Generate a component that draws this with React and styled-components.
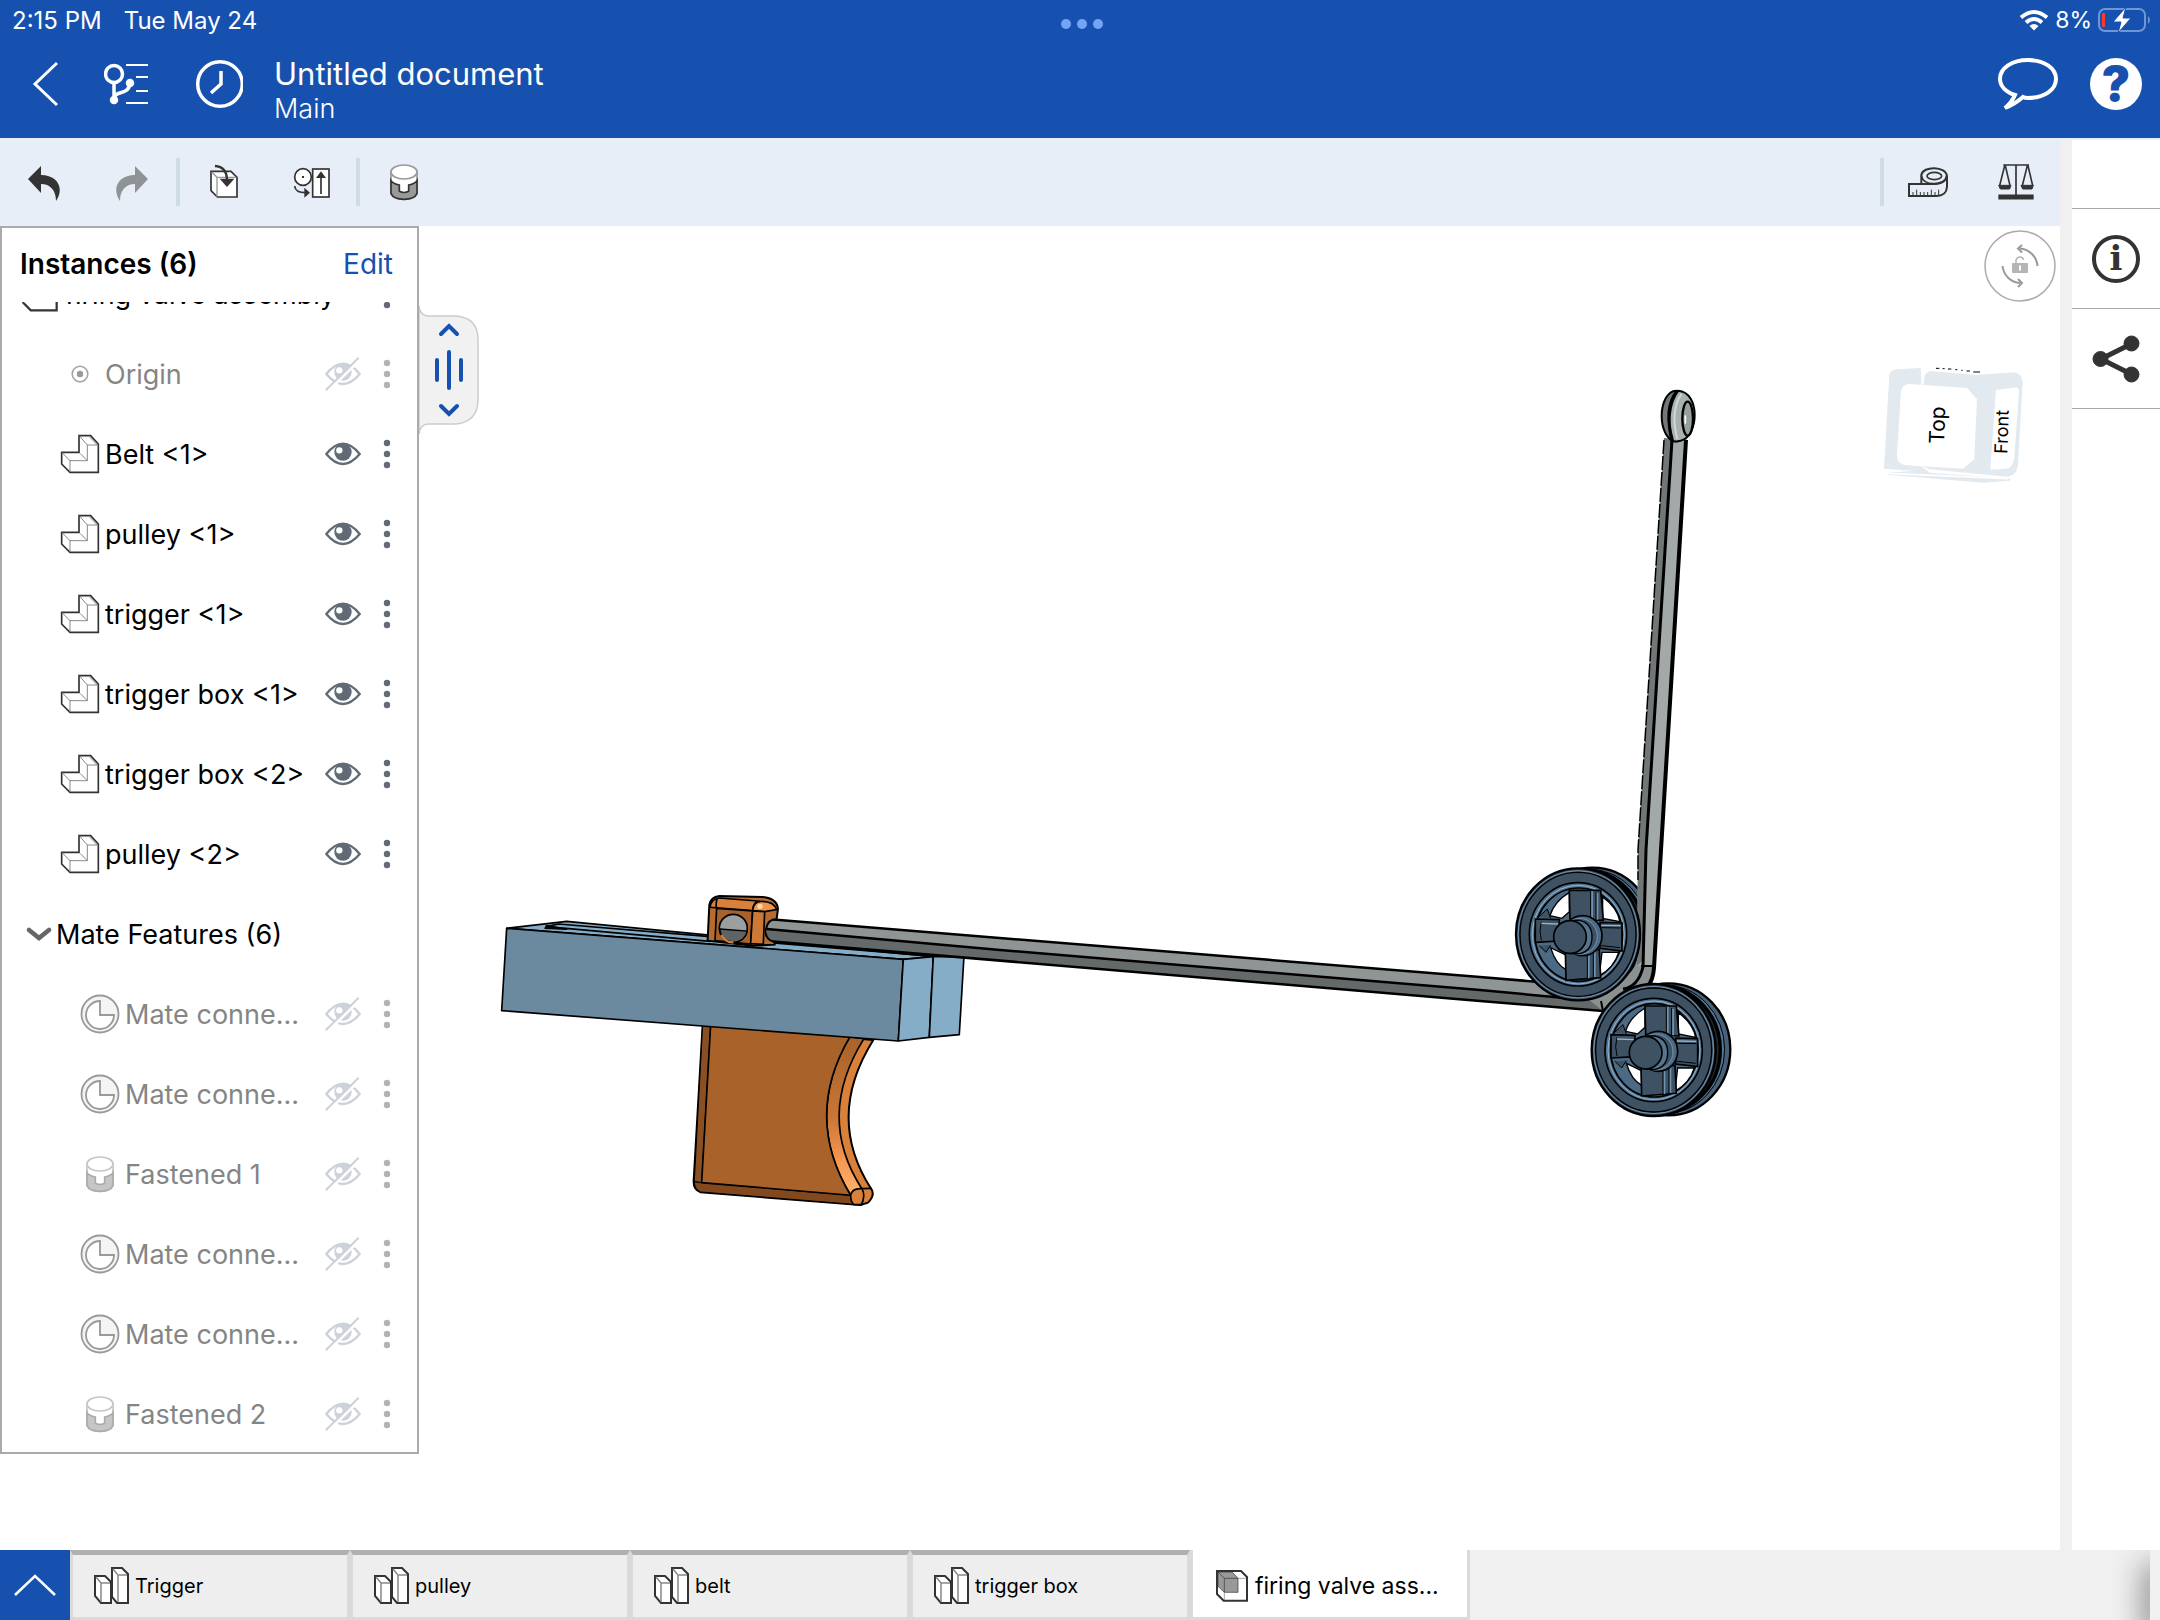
import React from "react";
import styled, { createGlobalStyle } from "styled-components";

const GlobalStyle = createGlobalStyle`
  * {
    box-sizing: border-box;
  }

  body {
    margin: 0;
    background: #ffffff;
    color: #000000;
    font-family: Inter, "Liberation Sans", sans-serif;
  }

  button {
    border: 0;
    padding: 0;
    background: none;
    color: inherit;
    font: inherit;
    cursor: pointer;
  }

  svg {
    display: block;
    flex: none;
  }
`;

const Page = styled.div`
  display: flex;
  flex-direction: column;
  min-height: 100vh;
`;

/* header */

const Header = styled.header`
  padding-bottom: 10px;
  background: #1651b0;
  color: #ffffff;
`;

const StatusBar = styled.div`
  display: grid;
  grid-template-columns: 1fr auto 1fr;
  align-items: center;
  height: 40px;
  padding: 0 8px 0 12px;
  font-size: 24px;
`;

const StatusLeft = styled.div`
  display: flex;
  gap: 22px;
`;

const StatusRight = styled.div`
  display: flex;
  justify-content: flex-end;
  align-items: center;
  gap: 6px;
  font-size: 23px;
`;

const MultitaskDots = styled.button`
  display: flex;
  gap: 6px;
  padding-top: 8px;

  i {
    width: 10px;
    height: 10px;
    border-radius: 50%;
    background: #74a5f5;
  }
`;

const Nav = styled.nav`
  display: flex;
  align-items: center;
  height: 88px;
`;

const IconButton = styled.button`
  display: flex;
  flex: none;
  align-items: center;
  justify-content: center;
  width: ${(props) => props.$width || 88}px;
  height: 84px;
`;

const TitleBlock = styled.div`
  flex: 1;
  padding-top: 10px;
`;

const Title = styled.h1`
  margin: 0;
  font-size: 31px;
  font-weight: 400;
  line-height: 40px;
`;

const Branch = styled.p`
  margin: 0;
  font-size: 27px;
  font-weight: 300;
  line-height: 30px;
`;

const HelpBadge = styled.span`
  width: 52px;
  height: 52px;
  border-radius: 50%;
  background: #ffffff;
  color: #1651b0;
  font-size: 48px;
  font-weight: 900;
  line-height: 52px;
`;

/* workspace */

const Workspace = styled.div`
  display: flex;
  flex: 1;
  border-top: 2px solid #e7eef8;
`;

const Main = styled.main`
  display: flex;
  flex: 1;
  flex-direction: column;
  min-width: 0;
`;

const Gutter = styled.div`
  width: 12px;
  background: #f0f0f0;
`;

const Rail = styled.aside`
  width: 88px;
`;

const RailSpacer = styled.div`
  height: 69px;
  border-bottom: 1px solid #aaaaaa;
`;

const RailButton = styled.button`
  display: flex;
  align-items: center;
  justify-content: center;
  width: 100%;
  height: 100px;
  border-bottom: 1px solid #aaaaaa;
`;

const InfoBadge = styled.span`
  width: 48px;
  height: 48px;
  border: 4px solid #333333;
  border-radius: 50%;
  color: #333333;
  font-family: "DejaVu Serif", serif;
  font-size: 34px;
  font-weight: 700;
  line-height: 38px;
`;

const Toolbar = styled.div`
  display: flex;
  align-items: center;
  height: 86px;
  padding-bottom: 2px;
  background: #e7eef8;
`;

const Divider = styled.span`
  width: 4px;
  height: 48px;
  background: #cfdce6;
`;

const Spacer = styled.span`
  flex: 1;
`;

const Stage = styled.div`
  display: flex;
  flex: 1;
  align-items: stretch;
`;

/* instance list */

const Panel = styled.section`
  display: flex;
  flex: none;
  flex-direction: column;
  width: 419px;
  margin-bottom: 96px;
  border: 2px solid #aaaaaa;
  background: #ffffff;
`;

const PanelHeader = styled.div`
  display: flex;
  align-items: center;
  justify-content: space-between;
  height: 74px;
  padding: 0 24px 2px 18px;
`;

const PanelTitle = styled.h2`
  margin: 0;
  font-size: 28px;
  font-weight: 600;
`;

const EditButton = styled.button`
  color: #1651b0;
  font-size: 28px;
`;

const ListViewport = styled.div`
  overflow: hidden;
`;

/* scrolled down by 48px */
const List = styled.ul`
  margin: -48px 0 -2px;
  padding: 0;
  list-style: none;
`;

const Row = styled.li`
  display: flex;
  align-items: center;
  height: 80px;
  padding: 0 8px 0 ${(props) => props.$indent}px;
  color: ${(props) => (props.$dim ? "#858585" : "#000000")};
  font-size: 27px;
`;

const RowIcon = styled.span`
  display: flex;
  flex: none;
  justify-content: center;
  width: 40px;
  margin-right: 5px;
`;

const RowLabel = styled.span`
  flex: 1;
  min-width: 0;
  white-space: nowrap;
`;

const RowButton = styled.button`
  display: flex;
  flex: none;
  align-items: center;
  justify-content: center;
  width: 44px;
  height: 60px;
`;

const GroupToggle = styled.button`
  display: flex;
  align-items: center;
  gap: 4px;
`;

/* canvas */

const Canvas = styled.div`
  position: relative;
  flex: 1;
  min-width: 0;
`;

const PanelHandle = styled.button`
  position: absolute;
  top: 80px;
  left: 0;
`;

const LockButton = styled.button`
  position: absolute;
  top: 4px;
  right: 4px;
`;

/* tabs */

const TabBar = styled.footer`
  display: flex;
  height: 70px;
  background: #f0f0f0;
  overflow: hidden;
`;

const TabMenu = styled.button`
  display: flex;
  align-items: center;
  justify-content: center;
  width: 70px;
  background: #1651b0;
`;

const Tab = styled.button`
  display: flex;
  align-items: center;
  gap: 5px;
  width: 280px;
  padding-left: 21px;
  border: 3px solid #dadada;
  border-top: ${(props) => (props.$active ? "0" : "5px solid #b0b0b0")};
  padding-top: ${(props) => (props.$active ? 4 : 0)}px;
  background: ${(props) => (props.$active ? "#ffffff" : "#eeeeee")};
  font-size: ${(props) => (props.$active ? 23 : 20)}px;
  text-align: left;
  white-space: nowrap;
`;

const TabDrawer = styled.div`
  width: 10px;
  margin-left: auto;
  background: #f0f0f0;
  box-shadow: 0 16px 30px 2px #444444;
`;

/* icons */

const BackIcon = () => (
  <svg width="28" height="48" viewBox="0 0 28 48" fill="none" stroke="#fff" strokeWidth="3">
    <path d="M26 3 4 24l22 21" />
  </svg>
);

const BranchIcon = () => (
  <svg width="44" height="44" viewBox="0 0 44 44" fill="none" stroke="#fff" strokeWidth="3.5">
    <circle cx="10" cy="12" r="8.5" />
    <path d="M10 20v18M10 36c1-8 15-2 16-15" />
    <circle cx="10" cy="38" r="2.5" fill="#fff" />
    <circle cx="26" cy="21" r="2.5" fill="#fff" />
    <path d="M22 3h22M32 15h12M32 29h12M22 41h22" strokeWidth="2" />
  </svg>
);

const HistoryIcon = () => (
  <svg width="50" height="50" viewBox="0 0 50 50" fill="none" stroke="#fff" strokeWidth="3.5">
    <circle cx="27" cy="25" r="22.3" />
    <path d="M28 12v13l-10 9" />
  </svg>
);

const ChatIcon = () => (
  <svg width="62" height="56" viewBox="0 0 62 56" fill="none" stroke="#fff" strokeWidth="4">
    <path d="M18 39C9 36 3 30 3 23 3 12 15 4 31 4s28 8 28 19-12 19-28 19q-3 0-5-1-8 7-18 11 7-6 10-13Z" />
  </svg>
);

const WifiIcon = () => (
  <svg width="30" height="22" viewBox="0 0 30 22" fill="none" stroke="#fff" strokeWidth="4">
    <path d="M2 8.500q13-11 26 0M7 13.500q8-7 16 0" />
    <path d="M10.500 17q4.500-4 9 0L15 21.500Z" fill="#fff" stroke="none" />
  </svg>
);

const BatteryIcon = () => (
  <svg width="54" height="28" viewBox="0 0 54 28">
    <rect x="1" y="3" width="46" height="22" rx="6" fill="none" stroke="#6f97d6" strokeWidth="2" />
    <path d="M50 10q4 4 0 8Z" fill="#6f97d6" />
    <rect x="4" y="7" width="3" height="14" rx="1" fill="#ff3b30" />
    <path d="M28 1 15 16h8l-3 11 13-15h-8Z" fill="#fff" stroke="#1651b0" strokeWidth="1" />
  </svg>
);

const UndoIcon = ({ flip, color }) => (
  <svg width="34" height="40" viewBox="0 0 34 40" fill={color}>
    <path
      d="M1 17 14 4v9c16 0 24 13 15 26 0-11-6-17-15-17v9Z"
      transform={flip ? "matrix(-1 0 0 1 34 0)" : undefined}
    />
  </svg>
);

const InsertIcon = () => (
  <svg width="40" height="40" viewBox="12 36 120 120" fill="#fff" stroke="#333" strokeWidth="5">
    <path d="M33 64h60l18 18v59H52L33 122Z" />
    <path d="M35 66 51 82h58M51 82v58" fill="none" stroke="#999" strokeWidth="4" />
    <path d="M45 48q35 2 36 42" fill="none" strokeWidth="7" />
    <path d="M59 86h44L81 111Z" fill="#333" stroke="none" />
  </svg>
);

const ReplicateIcon = () => (
  <svg width="40" height="40" viewBox="276 36 120 120" fill="#fff" stroke="#333" strokeWidth="5">
    <circle cx="309" cy="81" r="25" />
    <rect x="338" y="57" width="49" height="84" />
    <path d="M284 108q2 20 32 20M363 132V80" fill="none" />
    <path d="M348 84h30L363 64ZM313 113v30l17-15Z" fill="#333" stroke="none" />
    <rect x="306" y="78" width="6" height="6" fill="#333" stroke="none" />
  </svg>
);

const FastenedIcon = ({ dim }) => (
  <svg
    width="40"
    height="40"
    viewBox="552 36 120 120"
    strokeWidth="5"
    opacity={dim ? 0.55 : 1}
  >
    <path d="M573 64v66q8 18 39 18t39-18V64Z" fill="#fff" stroke="#999" />
    <path
      d="M573 92v39q8 17 39 17t39-17V92q-5 9-25 13v19q-14 7-28 0v-19q-20-4-25-13Z"
      fill="#999"
      stroke={dim ? "#666" : "#333"}
    />
    <ellipse cx="612" cy="66" rx="39" ry="21" fill="#fff" stroke="#999" />
  </svg>
);

const TapeIcon = () => (
  <svg width="40" height="40" viewBox="264 486 120 120" fill="none" stroke="#333" strokeWidth="6">
    <path d="M304 551V525c4-28 75-28 77 4v32q-2 27-32 27h-82v-36h72q38-1 41-24" />
    <ellipse cx="343" cy="528" rx="22" ry="11" strokeWidth="5" />
    <path d="M304 527q5 24 37 24" strokeWidth="5" />
    <path d="M279 585v-9M290 585v-16M301 585v-9M312 585v-9M323 585v-9M334 585v-16M345 585v-9M356 585v-16" strokeWidth="3" />
  </svg>
);

const ScaleIcon = () => (
  <svg width="40" height="40" viewBox="528 486 120 120" fill="none" stroke="#333" strokeWidth="5">
    <path d="M550 495h77M588 495v90M554 497l-15 60M556 497l14 60M622 497l-15 60M624 497l14 60" />
    <path d="M536 556h37l-4 11h-28ZM603 556h37l-4 11h-28Z" fill="#333" strokeWidth="3" />
    <path d="M535 591h106" strokeWidth="15" />
  </svg>
);

const ShareIcon = () => (
  <svg width="48" height="48" viewBox="0 0 48 48" fill="#333" stroke="#333">
    <path d="M39 9 9 24l30 15" fill="none" strokeWidth="5" />
    <circle cx="8.500" cy="24" r="7.500" />
    <circle cx="39.500" cy="8.500" r="7.500" />
    <circle cx="39.500" cy="39.500" r="7.500" />
  </svg>
);

const LockIcon = () => (
  <svg width="72" height="72" viewBox="0 0 72 72" fill="none" stroke="#999" strokeWidth="2">
    <circle cx="36" cy="36" r="35" fill="#fff" stroke="#aaa" strokeWidth="1.500" />
    <path d="M53.500 36A19 19 0 0 0 36 18.500M18.500 36A19 19 0 0 0 36 53" />
    <path d="m38 15-4 3.500 4 4M34 49l4 4-4 4" />
    <rect x="28" y="33" width="16" height="10" rx="1" fill="#b5b5b5" stroke="none" />
    <path d="M32 33v-3q1-3 4-3t3.500 3" stroke="#b5b5b5" strokeWidth="1.500" />
    <path d="M36 35.500v5" stroke="#fff" />
  </svg>
);

const PartIcon = () => (
  <svg width="40" height="40" viewBox="180 642 120 120" fill="#fff" stroke="#333" strokeWidth="5">
    <path d="M237 647h35l23 25v85h-85l-25-25v-35h52Z" />
    <path
      d="m240 650 22 25h32M262 675v47h-52v33M188 700l22 22M240 700l22 22M268 650l24 25"
      fill="none"
      stroke="#888"
      strokeWidth="3"
    />
  </svg>
);

const OriginIcon = () => (
  <svg width="40" height="40" viewBox="0 0 40 40">
    <circle cx="20" cy="20" r="7.800" fill="none" stroke="#a3a3a3" strokeWidth="1.600" />
    <circle cx="20" cy="20" r="3.200" fill="#999" />
  </svg>
);

const MateConnectorIcon = () => (
  <svg width="40" height="40" viewBox="0 0 40 40" fill="#fff" stroke="#999" strokeWidth="1.800">
    <circle cx="20" cy="20" r="18.500" fill="#f4f4f4" />
    <path d="M20 7v14h14A14 14 0 1 1 20 7Z" />
  </svg>
);

const AssemblyIcon = ({ size, shaded }) => (
  <svg width={size} height={size} viewBox="96 66 108 108" fill="#fff" stroke="#333" strokeWidth="6">
    <path d="M105 75h72l18 18v71h-70l-20-20Z" />
    {shaded && (
      <g fill="#999" stroke="#333" strokeWidth="2">
        <path d="M108 78h42l18 19v42h-41l-19-18Z" />
        <path d="m108 78 19 19h41M127 97v42" fill="none" />
        <path d="m168 97h24M127 139v24" stroke="#777" />
      </g>
    )}
  </svg>
);

const EyeIcon = ({ off }) => {
  const color = off ? "#cdd2d9" : "#626b75";
  return (
    <svg width="40" height="40" viewBox="969 642 120 120">
      <path d="M979 702q50-62 100 0-50 60-100 0Z" fill="#fff" stroke={color} strokeWidth="7" />
      <circle cx="1029" cy="696" r="26" fill={color} />
      <circle cx="1018" cy="691" r="9.500" fill="#fff" />
      {off && (
        <>
          <path d="m981 757 100-99" stroke="#fff" strokeWidth="8" />
          <path d="m977 751 99-98" stroke={color} strokeWidth="6" />
        </>
      )}
    </svg>
  );
};

const MoreIcon = ({ dim }) => (
  <svg width="8" height="30" viewBox="0 0 8 30" fill={dim ? "#b0b4b9" : "#626b75"}>
    <circle cx="4" cy="4" r="3.200" />
    <circle cx="4" cy="15" r="3.200" />
    <circle cx="4" cy="26" r="3.200" />
  </svg>
);

const ChevronIcon = () => (
  <svg width="26" height="14" viewBox="0 0 26 14" fill="none" stroke="#666" strokeWidth="4.500" strokeLinecap="round">
    <path d="m3 3 10 8 10-8" />
  </svg>
);

const HandleIcon = () => (
  <svg width="60" height="128" viewBox="0 0 60 128" fill="none">
    <path
      d="M0 0q1 10 10 10h27q22 2 22 23v62q-1 21-22 23H10q-9 0-10 10Z"
      fill="#f1f1f1"
      stroke="#ccc"
      strokeWidth="1.500"
    />
    <path
      d="m22 28 8-8 8 8M22 100l8 8 8-8M18 54v20M30 46v36M42 54v20"
      stroke="#1651b0"
      strokeWidth="4"
      strokeLinecap="round"
    />
  </svg>
);

const StudioIcon = () => (
  <svg width="36" height="38" viewBox="0 0 36 38" fill="#fff" stroke="#333" strokeWidth="2">
    <path d="M1 9h10l6 6v21H7l-6-7Z" />
    <path d="M18 1h10l6 6v29H23l-5-6Z" />
    <path d="m2 10 5 6h9M7 16v19M19 2l5 6h9M24 8v27" fill="none" stroke="#888" strokeWidth="1.500" />
  </svg>
);

const UpIcon = () => (
  <svg width="44" height="24" viewBox="0 0 44 24" fill="none" stroke="#fff" strokeWidth="2.500">
    <path d="M2 22 22 3l20 19" />
  </svg>
);

/* 3D model */

const PulleyRim = ({ x, y }) => (
  <g transform={`translate(${x} ${y})`} stroke="#000" strokeWidth="7">
    <ellipse cx="44" cy="-2" rx="186" ry="198" fill="#48617a" />
    <ellipse cx="30" cy="-2" rx="183" ry="194" fill="#55748f" strokeWidth="3" />
    <ellipse cx="18" cy="-1" rx="182" ry="192" fill="#1d2731" strokeWidth="10" />
  </g>
);

const PulleyFace = ({ x, y }) => (
  <g transform={`translate(${x} ${y})`} stroke="#000" strokeWidth="5" fill="#3f5263">
    <ellipse rx="186" ry="198" strokeWidth="7" />
    <ellipse rx="180" ry="191" fill="none" stroke="#6f94b4" strokeWidth="3" />
    <ellipse rx="174" ry="186" strokeWidth="4" />
    <ellipse rx="146" ry="155" fill="#55748f" />
    <ellipse cx="1" cy="1" rx="138" ry="148" fill="none" stroke="#8fb6d6" strokeWidth="3" />
    <ellipse cx="2" cy="1" rx="131" ry="140" fill="#4d6a84" />
    <g fill="#fff" strokeWidth="4">
      <path d="M-26-126Q-72-98-84-56l36 8 22-20Z" />
      <path d="M74-112q44 32 52 74l-52-10Z" />
      <path d="M122 54q-14 46-58 70l8-70Z" />
      <path d="M-82 40q15 50 46 66l-1-44Z" />
    </g>
    <path d="M-26-132h94l8 90-100-5Z" />
    <path d="M42-130v84M58-124v80" fill="none" stroke="#6f94b4" strokeWidth="6" />
    <path d="M38-130v84M54-126v82" fill="none" strokeWidth="3" />
    <path d="M-38 46h102l4 84-104 8Z" />
    <path d="M32 52v80M50 52v76" fill="none" stroke="#6f94b4" strokeWidth="6" />
    <path d="M28 52v82M46 52v80" fill="none" strokeWidth="3" />
    <path d="M-128-46l72 2v64l-72 4Z" />
    <path d="M-110-38q-8 28 0 56" fill="none" strokeWidth="3" />
    <path d="m-110-33 50 2" fill="none" stroke="#8fb6d6" strokeWidth="4" />
    <path d="M66-36l66 2v84l-66-8Z" />
    <path d="m70-27 58 1" fill="none" stroke="#8fb6d6" strokeWidth="4" />
    <path d="m70-20 58 1M70 34l56 6" fill="none" strokeWidth="3" />
    <path d="m-118-52 26-24 10 28M-116 34l20 20 14-22" strokeWidth="3" />
    <ellipse cx="14" cy="4" rx="58" ry="60" fill="#4d6a84" />
    <ellipse cx="4" cy="6" rx="54" ry="54" fill="#3f5263" stroke="#6f94b4" strokeWidth="3" />
    <path d="M-24-42H4q38 8 38 50T4 58h-28Z" fill="#55748f" strokeWidth="4" />
    <circle cx="-24" cy="8" r="49" />
  </g>
);

const Belt = () => (
  <>
    <g stroke="none">
      <path d="M767 919 1480 977 1575 985 1603 1011 1480 1001 767 941Z" fill="#8f9595" />
      <path d="M767 929 1000 950 1480 990 1590 999 1603 1011 1480 1001 767 941Z" fill="#646969" />
      <path d="M1637 960h17q1 51-51 51l-33-26q60 5 67-25Z" fill="#8b9191" />
      <path d="M1664 438 1638 850 1637 966h17l7-106 26-422Z" fill="#a3a9a9" />
      <path d="M1664 438l8 2-26 410-3 110-6 6 1-116Z" fill="#717677" />
    </g>
    <g fill="none" stroke="#000">
      <path d="M767 919 1480 977l95 8M767 941 1480 1001l123 10" strokeWidth="2.500" />
      <path d="M767 929 1000 950 1480 990l85 8" strokeWidth="2.500" />
      <path d="M1686 440 1661 850l-7 118q-1 12-6 18" strokeWidth="4" />
      <path d="M1672 440 1646 850l-3 117q-5 20-20 22" strokeWidth="3" />
      <path d="M1664 440 1638 850v30" strokeWidth="1.500" strokeDasharray="14 2" />
      <path d="M1641 966h13M1601 1001l2 10" strokeWidth="2" />
    </g>
    <g transform="translate(1600 370) scale(.3333)" stroke="#000">
      <ellipse cx="228" cy="138" rx="43" ry="76" fill="#727879" strokeWidth="6" />
      <path d="M235 62c66 5 62 135 8 150q-17 5-29 0c-10-40-10-110 21-150Z" fill="#a9b1b1" strokeWidth="6" />
      <path d="M230 64q-40 50-12 150" fill="none" strokeWidth="9" />
      <path d="M244 72q-34 50-12 136" fill="none" stroke="#cfd8d8" strokeWidth="6" />
      <ellipse cx="263" cy="146" rx="16" ry="51" fill="#989f9f" strokeWidth="7" />
      <path d="M256 136v25" stroke="#fff" strokeWidth="5" />
    </g>
  </>
);

const Trigger = () => (
  <g transform="translate(480 860) scale(.3333)" stroke="#000" strokeWidth="5">
    <path
      d="M668 495 1180 540Q1036 770 1172 984q16 20-8 44l-22 7-480-38q-22-8-21-34Z"
      fill="#d9813b"
      strokeWidth="6"
    />
    <path d="M668 495h24L665 968l-22-3Z" fill="#8a4f22" strokeWidth="3" />
    <path d="M643 966 1112 1006l8 27-458-37q-18-8-19-30Z" fill="#83491e" strokeWidth="3" />
    <path d="M1110 530Q969 770 1112 1006L1146 987Q1006 770 1152 536Z" fill="url(#bevel)" />
    <path d="M692 495 1110 530Q969 770 1112 1006L665 968Z" fill="#a8622a" />
    <path d="M1112 1006q4-22 34-20 12 22-2 48h-22q-10-8-10-28Z" fill="#d9813b" />
    <path d="M1146 986l28-1" />
  </g>
);

const TriggerHead = () => (
  <g transform="translate(480 860) scale(.3333)" stroke="#000" strokeWidth="5">
    <path
      d="M683 242 688 135q4-24 30-27l130 3q44 4 46 36l-4 30q-26 0-32 30t26 40v7l-66 3Z"
      fill="#b66c30"
      strokeWidth="6"
    />
    <path d="M690 142q4-26 28-28l115 9q-14 8-15 29Z" fill="#d9813b" />
    <path d="M818 152q2-28 26-28 38 0 46 25l-36 6Z" fill="#ee9550" />
    <path d="m710 145 108 8-6 99-107-10Z" fill="#a8622a" />
    <path d="m818 153 36 2-4 98-38-2Z" fill="#cc7837" />
    <path d="M713 113q-6 12-4 32" fill="none" />
    <circle cx="840" cy="139" r="8" fill="#ffd9a8" stroke="none" />
    <circle cx="760" cy="205" r="42" fill="#9aa0a0" />
    <path d="m719 207 83 6q-6 32-42 34-36-4-41-40Z" fill="#5e6364" strokeWidth="4" />
    <path d="M724 225q14 24 36 22" fill="none" stroke="#d9813b" strokeWidth="7" />
  </g>
);

const TriggerBox = () => (
  <g transform="translate(480 860) scale(.3333)" stroke="#000" strokeWidth="5" strokeLinejoin="round">
    <path d="m80 205 180-21 1100 106-90 8Z" fill="#85adc8" />
    <path d="m200 200 35-8 455 38v14Z" fill="#85adc8" strokeWidth="5" />
    <path d="m200 196 60 12-65-3Z" fill="#000" strokeWidth="4" />
    <path d="m880 248 450 38" fill="none" strokeWidth="6" />
    <path d="m80 205 1190 93-15 245L65 452Z" fill="#6b8a9f" />
    <path d="m1270 298 90-8-12 242-93 11Z" fill="#85adc8" />
    <path d="m1360 290 92 0-14 234-90 8Z" fill="#85adc8" />
  </g>
);

const ViewCube = () => (
  <g transform="translate(1600 370) scale(.3333)">
    <path
      d="M868 15q3-16 24-17l70-4 3 45 6 6 3-30 14-12 140 12 116-8q23 5 24 32l-14 247q-4 30-30 34l-235-22-30-12 30 22 243 18-2 6-80 6-286-24v-6l78-6-90-6Z"
      fill="#e2e9ef"
    />
    <path d="M903 62q4-18 24-20l175 12 29 34-8 180-34 28-170-10q-28-4-28-28Z" fill="#fff" />
    <path d="m1188 60 62-8q8 4 7 12l-14 200q-6 32-24 32l-48 3Z" fill="#fff" />
    <path d="m966-8v52M865 310l360 16" stroke="#fff" strokeWidth="5" />
    <path d="M1008-5h10M1028-4h6M1044-3h10M1066-1h6M1084 1h4M1100 3h10M1120 6h20" stroke="#000" strokeWidth="3" />
    <text transform="translate(1032 222) rotate(-88)" fontSize="63">
      Top
    </text>
    <text transform="translate(1222 252) rotate(-88)" fontSize="54">
      Front
    </text>
  </g>
);

const Model = () => (
  <svg width="100%" viewBox="419 226 1641 1324" role="img" aria-label="Assembly model">
    <defs>
      <linearGradient id="bevel" x1="0" y1="0" x2="0" y2="1">
        <stop offset="0" stopColor="#a8622a" />
        <stop offset=".5" stopColor="#c87535" />
        <stop offset=".8" stopColor="#f79a55" />
        <stop offset="1" stopColor="#ffb36d" />
      </linearGradient>
    </defs>
    <g transform="translate(1480 840) scale(.3333)">
      <PulleyRim x={294} y={283} />
    </g>
    <Trigger />
    <TriggerBox />
    <Belt />
    <TriggerHead />
    <g transform="translate(1480 840) scale(.3333)">
      <PulleyFace x={294} y={283} />
      <PulleyRim x={521} y={630} />
      <PulleyFace x={521} y={630} />
    </g>
    <ViewCube />
  </svg>
);

const parts = ["Belt <1>", "pulley <1>", "trigger <1>", "trigger box <1>", "trigger box <2>", "pulley <2>"];

const mates = [
  { id: 1, name: "Mate conne..." },
  { id: 2, name: "Mate conne..." },
  { id: 3, name: "Fastened 1", fastened: true },
  { id: 4, name: "Mate conne..." },
  { id: 5, name: "Mate conne..." },
  { id: 6, name: "Fastened 2", fastened: true },
];

const tabs = ["Trigger", "pulley", "belt", "trigger box"];

function InstanceRow({ name, icon, indent, hidden, noEye }) {
  return (
    <Row $indent={indent} $dim={hidden}>
      <RowIcon>{icon}</RowIcon>
      <RowLabel>{name}</RowLabel>
      {!noEye && (
        <RowButton aria-label={`${hidden ? "Show" : "Hide"} ${name}`}>
          <EyeIcon off={hidden} />
        </RowButton>
      )}
      <RowButton aria-label={`More options for ${name}`}>
        <MoreIcon dim={hidden} />
      </RowButton>
    </Row>
  );
}

function InstancePanel() {
  return (
    <Panel>
      <PanelHeader>
        <PanelTitle>Instances (6)</PanelTitle>
        <EditButton>Edit</EditButton>
      </PanelHeader>
      <ListViewport>
        <List>
          <InstanceRow name="firing valve assembly" icon={<AssemblyIcon size={40} />} indent={18} noEye />
          <InstanceRow name="Origin" icon={<OriginIcon />} indent={58} hidden />
          {parts.map((name) => (
            <InstanceRow key={name} name={name} icon={<PartIcon />} indent={58} />
          ))}
          <Row $indent={24}>
            <GroupToggle aria-expanded="true">
              <ChevronIcon />
              Mate Features (6)
            </GroupToggle>
          </Row>
          {mates.map((mate) => (
            <InstanceRow
              key={mate.id}
              name={mate.name}
              icon={mate.fastened ? <FastenedIcon dim /> : <MateConnectorIcon />}
              indent={78}
              hidden
            />
          ))}
        </List>
      </ListViewport>
    </Panel>
  );
}

function App() {
  return (
    <Page>
      <GlobalStyle />
      <Header>
        <StatusBar>
          <StatusLeft>
            <span>2:15 PM</span>
            <span>Tue May 24</span>
          </StatusLeft>
          <MultitaskDots aria-label="Multitasking">
            <i />
            <i />
            <i />
          </MultitaskDots>
          <StatusRight>
            <WifiIcon />
            <span>8%</span>
            <BatteryIcon />
          </StatusRight>
        </StatusBar>
        <Nav>
          <IconButton $width={90} aria-label="Back">
            <BackIcon />
          </IconButton>
          <IconButton $width={72} aria-label="Versions">
            <BranchIcon />
          </IconButton>
          <IconButton $width={112} aria-label="History">
            <HistoryIcon />
          </IconButton>
          <TitleBlock>
            <Title>Untitled document</Title>
            <Branch>Main</Branch>
          </TitleBlock>
          <IconButton aria-label="Comments">
            <ChatIcon />
          </IconButton>
          <IconButton aria-label="Help">
            <HelpBadge>?</HelpBadge>
          </IconButton>
        </Nav>
      </Header>

      <Workspace>
        <Main>
          <Toolbar>
            <IconButton aria-label="Undo">
              <UndoIcon color="#333333" />
            </IconButton>
            <IconButton aria-label="Redo" disabled>
              <UndoIcon color="#909396" flip />
            </IconButton>
            <Divider />
            <IconButton aria-label="Insert">
              <InsertIcon />
            </IconButton>
            <IconButton aria-label="Replicate">
              <ReplicateIcon />
            </IconButton>
            <Divider />
            <IconButton aria-label="Fastened mate">
              <FastenedIcon />
            </IconButton>
            <Spacer />
            <Divider />
            <IconButton aria-label="Measure">
              <TapeIcon />
            </IconButton>
            <IconButton aria-label="Mass properties">
              <ScaleIcon />
            </IconButton>
          </Toolbar>
          <Stage>
            <InstancePanel />
            <Canvas>
              <Model />
              <PanelHandle aria-label="Resize panel">
                <HandleIcon />
              </PanelHandle>
              <LockButton aria-label="Lock rotation">
                <LockIcon />
              </LockButton>
            </Canvas>
          </Stage>
        </Main>
        <Gutter />
        <Rail>
          <RailSpacer />
          <RailButton aria-label="Details">
            <InfoBadge>i</InfoBadge>
          </RailButton>
          <RailButton aria-label="Share">
            <ShareIcon />
          </RailButton>
        </Rail>
      </Workspace>

      <TabBar>
        <TabMenu aria-label="Show tabs">
          <UpIcon />
        </TabMenu>
        {tabs.map((name) => (
          <Tab key={name}>
            <StudioIcon />
            {name}
          </Tab>
        ))}
        <Tab $active>
          <AssemblyIcon size={36} shaded />
          firing valve ass...
        </Tab>
        <TabDrawer />
      </TabBar>
    </Page>
  );
}

export default App;
